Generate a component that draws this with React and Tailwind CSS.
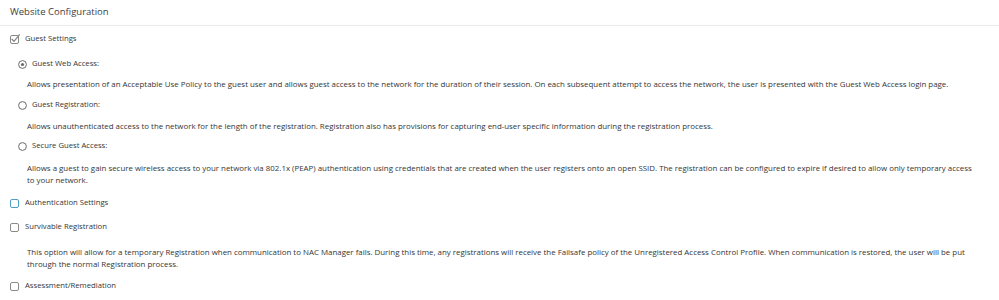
import React from "react";

function Checkbox({ checked = false, focused = false }) {
  return (
    <svg width="10" height="10" viewBox="0 0 10 10" className="shrink-0">
      <rect
        x="0.5"
        y="1.5"
        width="8"
        height="8"
        rx="1.5"
        fill="white"
        stroke={focused ? "#4d9fc6" : "#8a8a8a"}
        strokeWidth="1"
      />
      {checked && (
        <path d="M2 5.2 L4 7.4 L9.3 0.8" fill="none" stroke="#8a8a8a" strokeWidth="1.3" strokeLinecap="round" strokeLinejoin="round" />
      )}
    </svg>
  );
}

function Radio({ checked = false }) {
  return (
    <svg width="9" height="9" viewBox="0 0 9 9" className="shrink-0">
      <circle cx="4.5" cy="4.5" r="3.9" fill="white" stroke="#6a6a6a" strokeWidth="1" />
      {checked && <circle cx="4.5" cy="4.5" r="1.6" fill="#6a6a6a" />}
    </svg>
  );
}

function Row({ children, className = "" }) {
  return <div className={`flex h-[12px] items-center gap-[5px] text-[7.7px] ${className}`}>{children}</div>;
}

// texto descriptivo, siempre arranca en x=27
function Desc({ children, className = "" }) {
  return (
    <p className={`w-[946px] text-[7.9px] leading-[12px] text-[#353535] ${className}`}>
      {children}
    </p>
  );
}

export default function App() {
  return (
    <div className="h-[300px] w-[999px] overflow-hidden bg-white font-['Open_Sans',sans-serif] text-[#353535]">
      {/* Encabezado */}
      <div className="flex h-[26px] items-center border-b border-[#ececec] pl-[10px]">
        <span className="text-[9.5px] text-[#404040]">Website Configuration</span>
      </div>

      <div className="pl-[10px]">
        <Row className="mt-[7px]">
          <Checkbox checked />
          <span>Guest Settings</span>
        </Row>

        <div className="pl-[8px]">
          <Row className="mt-[13px]">
            <Radio checked />
            <span>Guest Web Access:</span>
          </Row>
          <Desc className="ml-[9px] mt-[8px]">
            Allows presentation of an Acceptable Use Policy to the guest user and allows guest access to the network for the duration of their session. On each subsequent attempt to access the network, the user is presented with the Guest Web Access login page.
          </Desc>

          <Row className="mt-[9px]">
            <Radio />
            <span>Guest Registration:</span>
          </Row>
          <Desc className="ml-[9px] mt-[9px]">
            Allows unauthenticated access to the network for the length of the registration. Registration also has provisions for capturing end-user specific information during the registration process.
          </Desc>

          <Row className="mt-[8px]">
            <Radio />
            <span>Secure Guest Access:</span>
          </Row>
          <Desc className="ml-[9px] mt-[10px]">
            Allows a guest to gain secure wireless access to your network via 802.1x (PEAP) authentication using credentials that are created when the user registers onto an open SSID. The registration can be configured to expire if desired to allow only temporary access to your network.
          </Desc>
        </div>

        <Row className="mt-[11px]">
          <Checkbox focused />
          <span>Authentication Settings</span>
        </Row>

        <Row className="mt-[12px]">
          <Checkbox />
          <span>Survivable Registration</span>
        </Row>
        <Desc className="ml-[17px] mt-[13px]">
          This option will allow for a temporary Registration when communication to NAC Manager fails. During this time, any registrations will receive the Failsafe policy of the Unregistered Access Control Profile. When communication is restored, the user will be put through the normal Registration process.
        </Desc>

        <Row className="mt-[10px]">
          <Checkbox />
          <span>Assessment/Remediation</span>
        </Row>
      </div>
    </div>
  );
}
